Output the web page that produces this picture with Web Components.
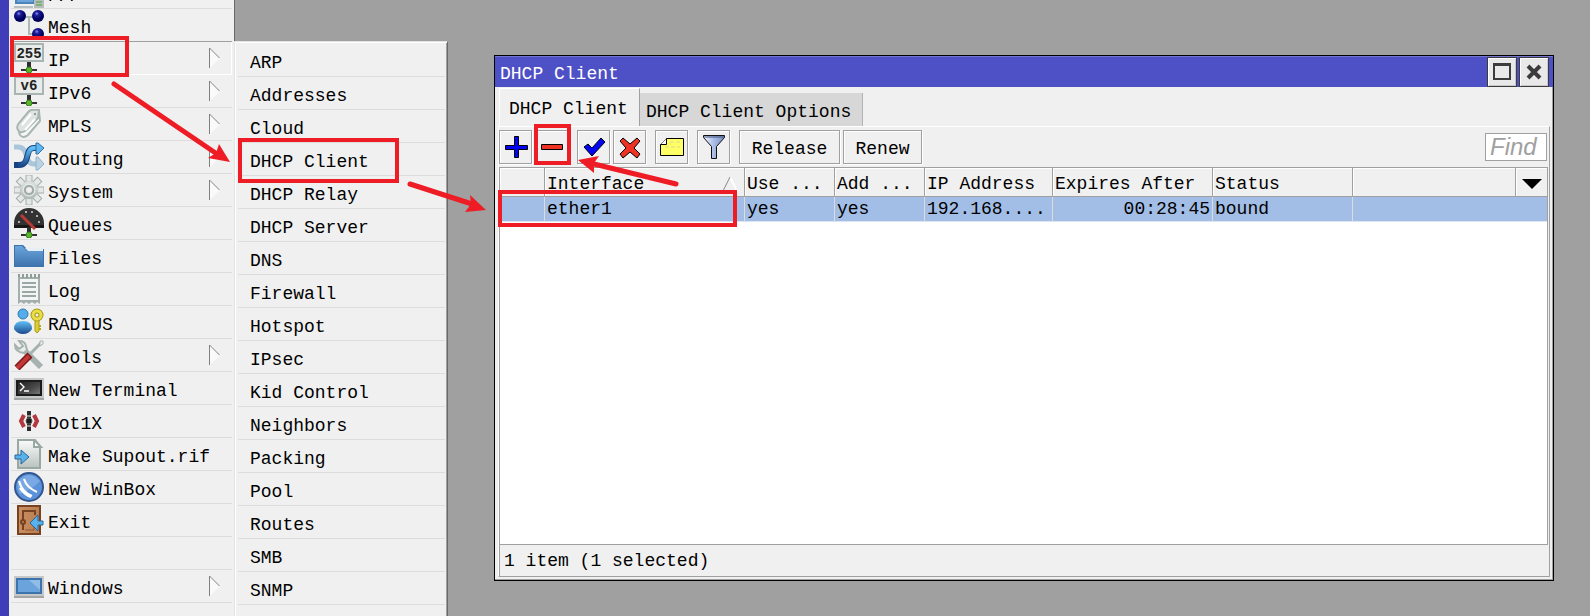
<!DOCTYPE html>
<html lang="en">
<head>
<meta charset="utf-8">
<title>WinBox - DHCP Client</title>
<style>
  html, body { margin: 0; height: 100%; }
  body {
    overflow: hidden;
    background: #a0a0a0;
    color: #000;
    font: 18px/24px "Liberation Mono", "DejaVu Sans Mono", monospace;
  }
</style>
</head>
<body>
<wb-desktop>
  <wb-menu slot="menu" label="Main menu">
    <wb-item icon="ppp" cut>PPP</wb-item>
    <wb-item icon="mesh" before-active>Mesh</wb-item>
    <wb-item icon="ip" sub active>IP</wb-item>
    <wb-item icon="ipv6" sub>IPv6</wb-item>
    <wb-item icon="mpls" sub>MPLS</wb-item>
    <wb-item icon="routing" sub>Routing</wb-item>
    <wb-item icon="system" sub>System</wb-item>
    <wb-item icon="queues">Queues</wb-item>
    <wb-item icon="files">Files</wb-item>
    <wb-item icon="log">Log</wb-item>
    <wb-item icon="radius">RADIUS</wb-item>
    <wb-item icon="tools" sub>Tools</wb-item>
    <wb-item icon="terminal">New Terminal</wb-item>
    <wb-item icon="dot1x">Dot1X</wb-item>
    <wb-item icon="supout">Make Supout.rif</wb-item>
    <wb-item icon="winbox">New WinBox</wb-item>
    <wb-item icon="exit">Exit</wb-item>
    <wb-item blank></wb-item>
    <wb-item icon="windows" sub>Windows</wb-item>
  </wb-menu>
  <wb-menu slot="submenu" popup label="IP">
    <wb-item>ARP</wb-item>
    <wb-item>Addresses</wb-item>
    <wb-item>Cloud</wb-item>
    <wb-item>DHCP Client</wb-item>
    <wb-item>DHCP Relay</wb-item>
    <wb-item>DHCP Server</wb-item>
    <wb-item>DNS</wb-item>
    <wb-item>Firewall</wb-item>
    <wb-item>Hotspot</wb-item>
    <wb-item>IPsec</wb-item>
    <wb-item>Kid Control</wb-item>
    <wb-item>Neighbors</wb-item>
    <wb-item>Packing</wb-item>
    <wb-item>Pool</wb-item>
    <wb-item>Routes</wb-item>
    <wb-item>SMB</wb-item>
    <wb-item>SNMP</wb-item>
    <wb-item>SSH</wb-item>
  </wb-menu>
  <wb-window slot="window">
    <span slot="title">DHCP Client</span>
    <wb-tab slot="tabs" selected>DHCP Client</wb-tab>
    <wb-tab slot="tabs">DHCP Client Options</wb-tab>
    <wb-toolbar slot="toolbar"></wb-toolbar>
    <wb-grid></wb-grid>
    <span slot="status">1 item (1 selected)</span>
  </wb-window>
  <wb-marks slot="marks"></wb-marks>
</wb-desktop>

<script>
const port = `<path d="M13 19h4v6h-4z" fill="#2e2e2e"/><path d="M1 27h28" stroke="url(#fade)" stroke-width="2"/><path d="M7 27h16" stroke="#333" stroke-width="2"/><circle cx="15" cy="27" r="3" fill="#5ab52c" stroke="#35821a" stroke-width="1"/>`;
const tooth = [0, 45, 90, 135, 180, 225, 270, 315].map(a => `<path d="M12 7V0h6v7z" transform="rotate(${a} 15 15)"/>`).join('');
const defs = `<defs>
  <linearGradient id="fade"><stop stop-color="#aaa" stop-opacity=".3"/><stop offset=".5" stop-color="#222"/><stop offset="1" stop-color="#aaa" stop-opacity=".3"/></linearGradient>
  <linearGradient id="blue" x2="0" y2="1"><stop stop-color="#6aa5dc"/><stop offset="1" stop-color="#3f74ae"/></linearGradient>
  <linearGradient id="sky" x2="0" y2="1"><stop stop-color="#62c0f6"/><stop offset="1" stop-color="#1c4a8e"/></linearGradient>
  <linearGradient id="paper" x2="0" y2="1"><stop stop-color="#fafcfb"/><stop offset="1" stop-color="#b8c2be"/></linearGradient>
  <linearGradient id="steel" gradientUnits="userSpaceOnUse" x1="0" y1="4" x2="0" y2="26"><stop stop-color="#e4e8e7"/><stop offset="1" stop-color="#a9b4b1"/></linearGradient>
  <linearGradient id="screen" x2="1" y2="1"><stop stop-color="#222"/><stop offset=".6" stop-color="#4a4a4a"/><stop offset="1" stop-color="#777"/></linearGradient>
  <radialGradient id="ball" cx=".4" cy=".3"><stop stop-color="#8a90e8"/><stop offset=".35" stop-color="#1c1c9c"/><stop offset="1" stop-color="#00005c"/></radialGradient>
  <linearGradient id="door" x2="1"><stop stop-color="#c98f61"/><stop offset="1" stop-color="#b87d50"/></linearGradient>
  <linearGradient id="flt"><stop stop-color="#f2f6ff"/><stop offset=".5" stop-color="#a9bce6"/><stop offset="1" stop-color="#7c90c2"/></linearGradient>
</defs>`;
const ICONS = {
  ppp: `<path d="M1 4h20v22H1z" fill="#4c83bd"/><path d="M3 6h16v18H3z" fill="#6ba5dc"/><path d="M0 28h19v2H0z" fill="#b5bfc4"/><path d="M20 2h10v28H20z" fill="#b4beba"/><path d="M22 24h6M22 27h6" stroke="#4f9e3a"/>`,
  mesh: `<path d="M12 7h6M15 7v17h4" fill="none" stroke="#adb9b6" stroke-width="2"/><circle cx="6" cy="6" r="6" fill="url(#ball)"/><circle cx="24" cy="6" r="6" fill="url(#ball)"/><circle cx="24" cy="24" r="6" fill="url(#ball)"/>`,
  ip: `<path d="M1 1h28v17H1z" fill="#e9ecea" stroke="#a9b5b2" stroke-width="2"/><text x="15" y="15" text-anchor="middle" font-family="Liberation Mono,monospace" font-weight="700" font-size="14" fill="#222">255</text>${port}`,
  ipv6: `<path d="M1 1h28v17H1z" fill="#e9ecea" stroke="#a9b5b2" stroke-width="2"/><text x="15" y="14" text-anchor="middle" font-family="Liberation Mono,monospace" font-weight="700" font-size="14" fill="#222">v6</text>${port}`,
  mpls: `<path d="M17 6Q20 2 25 2L26 12L14 26Q9 30 6 26Q4 23 7 19z" fill="#f4f6f5" stroke="#a9b5b2" stroke-width="2"/><path d="M15 2Q18 0 25 1L24 9L11 22Q6 25 4 21Q2 18 5 14z" fill="#dfe4e2" stroke="#a9b5b2" stroke-width="2"/><path d="M17 5L8 16M21 10L11 21" stroke="#fff" stroke-width="2"/><circle cx="21" cy="5" r="1" fill="#788380"/>`,
  routing: `<path d="M0 5h4C15 5 10 22 20 22h3" fill="none" stroke="#a9c6da" stroke-width="5"/><path d="M22 15h2l6 7-6 6h-2z" fill="#b9d1e2" stroke="#92b4cb"/><path d="M0 23h5C17 23 10 6 20 6h3" fill="none" stroke="#19437e" stroke-width="6"/><path d="M4 23h1C16 23 11 6 20 6h3" fill="none" stroke="url(#sky)" stroke-width="4"/><path d="M22 1h2l6 5-6 6h-2z" fill="#5fb7ee" stroke="#2b6ea7"/>`,
  system: `<g fill="url(#steel)" stroke="#a3aeab" stroke-width="1"><g>${tooth}</g></g><circle cx="15" cy="15" r="9" fill="url(#steel)"/><circle cx="15" cy="15" r="4" fill="#efefef" stroke="#a0aba8" stroke-width="2"/><circle cx="15" cy="15" r="6" fill="none" stroke="#eef1f0"/>`,
  queues: `<path d="M0 15A15 15 0 0 1 30 15V19H0z" fill="#323232"/><path d="M0 17h30v3H0z" fill="#181818"/><g fill="#d8d8d8"><circle cx="5" cy="14" r="1"/><circle cx="12" cy="4" r="1"/><circle cx="18" cy="4" r="1"/><circle cx="23" cy="8" r="1"/><circle cx="25" cy="14" r="1"/></g>${port}<path d="M7 7L21 21" stroke="#b83a36" stroke-width="3"/>`,
  files: `<path d="M0 4h9l4 4h17v18H0z" fill="#3d73ad"/><path d="M11 7h18v4H15z" fill="#e7eff6"/><path d="M1 5h7l5 5h16v15H1z" fill="url(#blue)"/>`,
  log: `<path d="M4 3h22v27l-3-2-2 2-3-2-3 2-3-2-2 2-3-2-3 2z" fill="#a3afac"/><path d="M6 5h18v21H6z" fill="#f3f5f4"/><path d="M4 0h2v3H4zM8 0h2v4H8zM12 0h2v4h-2zM16 0h2v4h-2zM20 0h2v4h-2zM24 0h2v4h-2z" fill="#8f9d99"/><path d="M8 9h14M8 13h14M8 18h14M8 22h14" stroke="#9aa7a4" stroke-width="2"/>`,
  radius: `<circle cx="9" cy="7" r="5" fill="#55adea" stroke="#2e78b2"/><path d="M0 22Q0 14 9 14Q18 14 18 22Q15 27 9 27Q3 27 0 22z" fill="url(#sky)"/><path d="M21 12h4v12l-2 2-2-2z" fill="#ddcf36" stroke="#a99a12"/><circle cx="23" cy="8" r="4" fill="none" stroke="#a99a12" stroke-width="5"/><circle cx="23" cy="8" r="4" fill="none" stroke="#e9dd48" stroke-width="3"/><path d="M25 19h2M25 22h2" stroke="#b8a81c" stroke-width="2"/>`,
  tools: `<path d="M10 10L27 27" stroke="#a6b2af" stroke-width="6"/><path d="M5 1Q11 1 12 6L13 10L10 13Q1 12 1 5L5 9L9 6z" fill="#e9edec" stroke="#a6b2af" stroke-width="2"/><path d="M27 3L13 17" stroke="#a6b2af" stroke-width="3"/><path d="M26 1h3v3l-3 2z" fill="#eef1f0" stroke="#a6b2af"/><path d="M16 15L3 28" stroke="#7e1717" stroke-width="7"/><path d="M15 16L3 28" stroke="#c13838" stroke-width="4"/>`,
  terminal: `<path d="M0 5h30v20H0z" fill="#c6c8c8"/><path d="M0 25h30v2H0z" fill="#a4a6a6"/><path d="M2 7h26v16H2z" fill="#1b1b1b"/><path d="M4 9h22v12H4z" fill="url(#screen)"/><path d="M6 10l4 4-4 4M10 18h5" fill="none" stroke="#fff" stroke-width="1.4"/>`,
  dot1x: `<path d="M10 9L7 15l3 6M20 9l3 6-3 6" fill="none" stroke="#b3383f" stroke-width="4"/><path d="M13 5h4v20h-4z" fill="#2b2b2b"/><path d="M13 10h4M13 20h4" stroke="#efefef"/><circle cx="15" cy="15" r="3" fill="#1b1b1b" stroke="#555"/>`,
  supout: `<path d="M4 1h17l5 6v22H4z" fill="url(#paper)" stroke="#9aa8a4" stroke-width="2"/><path d="M20 1v7h7z" fill="#fff" stroke="#9aa8a4" stroke-width="2"/><path d="M1 16h6v-5l8 7-8 7v-5H1z" fill="#58b2ec" stroke="#2a669e"/>`,
  winbox: `<circle cx="15" cy="15" r="14" fill="#5b92da" stroke="#33568f" stroke-width="2"/><path d="M4 9Q15-3 26 9Q20 16 6 22Q2 15 4 9z" fill="#8fb8ec" opacity=".6"/><path d="M5 9Q8 20 18 24M10 7Q13 16 23 20M6 16Q11 23 17 25" fill="none" stroke="#fff" stroke-width="2.2"/>`,
  exit: `<path d="M4 1h22v28H4z" fill="url(#door)" stroke="#774221" stroke-width="2"/><path d="M9 25V6h12v4" fill="none" stroke="#774221" stroke-width="2"/><path d="M11 25h9v-5" fill="none" stroke="#915b34"/><circle cx="9" cy="17" r="2" fill="#b98056" stroke="#774221" stroke-width="2"/><path d="M29 16h-5v-6l-8 8 8 8v-6h5z" fill="#58b2ec" stroke="#2a669e"/>`,
  windows: `<path d="M0 5h30v20H0z" fill="#c6c8c8"/><path d="M0 25h30v2H0z" fill="#a4a6a6"/><path d="M2 7h26v16H2z" fill="#3d73ad"/><path d="M4 9h22v12H4z" fill="#6ba3dc"/><path d="M15 9h11v10z" fill="#b8d6f2" opacity=".5"/>`,
  add: `<path d="M13.500 4.500h4v9h9v4h-9v8h-4v-8h-9v-4h9z" fill="#0404f4" stroke="#000"/>`,
  remove: `<path d="M4.500 12.500h21v5h-21z" fill="#ee3224" stroke="#000"/>`,
  enable: `<path d="M5 15l4-3 4 4L22 6l4 4-13 14z" fill="#0404f4" stroke="#000"/>`,
  disable: `<path d="M8 6l7 6 7-6 3 3-6 7 6 6-3 4-7-6-7 6-3-4 6-6-6-7z" fill="#ee3224" stroke="#000"/>`,
  comment: `<path d="M3.500 12.500l6-6h17v17h-23z" fill="#ffff66" stroke="#000"/><path d="M3.500 12.500h6v-6" fill="#fff" stroke="#000"/><path d="M13 10h10M8 15h15" stroke="#d9d98a" stroke-dasharray="4 2"/>`,
  filter: `<path d="M4.500 3.500h21v2l-8 9v12h-5v-12l-8-9z" fill="url(#flt)" stroke="#111"/><path d="M5 5h20" stroke="#3c4c78"/>`,
  maximize: `<path d="M7 7h16v15H7z" fill="none" stroke="#3c3c3c" stroke-width="2"/><path d="M6 6h18v3H6z" fill="#3c3c3c"/>`,
  close: `<path d="M9 9l12 12M21 9L9 21" stroke="#3c3c3c" stroke-width="4"/>`
};

function define(name, html, setup) {
  customElements.define(name, class extends HTMLElement {
    constructor() {
      super();
      const tpl = document.createElement('template');
      tpl.innerHTML = html;
      this.attachShadow({ mode: 'open' }).append(tpl.content.cloneNode(true));
    }
    connectedCallback() { if (setup) setup(this, this.shadowRoot); }
  });
}

define('wb-icon', `<style>
  :host { display: block; flex: none; width: 30px; height: 30px; }
  svg { display: block; width: 100%; height: 100%; }
</style><svg viewBox="0 0 30 30" aria-hidden="true"></svg>`,
(el, root) => { root.querySelector('svg').innerHTML = defs + (ICONS[el.getAttribute('name')] || ''); });

define('wb-desktop', `<style>
  :host { display: flex; position: relative; height: 100vh; overflow: hidden; align-items: stretch; }
  .edge { flex: none; width: 9px; background: #403db9; }
  main { flex: 1; min-width: 0; display: flex; padding: 55px 36px 35px 46px; }
  ::slotted([slot=window]) { flex: 1; min-width: 0; }
</style>
<div class="edge"></div>
<slot name="menu"></slot>
<slot name="submenu"></slot>
<main><slot name="window"></slot></main>
<slot name="marks"></slot>`);

define('wb-menu', `<style>
  :host { display: block; flex: none; box-sizing: border-box; width: 226px; padding: 0 2px; background: #f0f0f0; border-right: 1px solid #696969; }
  :host([popup]) { width: 214px; margin: 41px 0 0 -1px; padding: 0 2px; border: solid; border-width: 1px 1px 0; border-color: #e3e3e3 #696969 #696969 #e3e3e3; box-shadow: inset 1px 1px #fff, inset -1px 0 #a0a0a0; }
  :host([popup]) nav { padding: 2px 0 0 1px; }
</style><nav><slot></slot></nav>`,
(el, root) => root.querySelector('nav').setAttribute('aria-label', el.getAttribute('label')));

define('wb-item', `<style>
  :host { display: block; }
  button, .blank { display: flex; align-items: center; gap: 4px; box-sizing: border-box; width: 100%; height: 33px; margin: 0; padding: 0 11px 0 3px; border: 0; border-bottom: 1px solid #dcdcdc; background: none; color: inherit; font: inherit; text-align: left; white-space: pre; }
  .label { flex: 1; padding-top: 6px; }
  .arrow { width: 12px; height: 22px; }
  :host(:not([icon])) button { padding-left: 12px; }
  :host([cut]) button { height: 9px; align-items: flex-end; overflow: hidden; }
  :host([before-active]) button { border-bottom-color: #a0a0a0; }
  :host([active]) button { border-bottom-color: #fff; box-shadow: inset -1px 0 #fff; }
</style>
<button type="button"><wb-icon></wb-icon><span class="label"><slot></slot></span>
<svg class="arrow" viewBox="0 0 12 22" aria-hidden="true"><path d="M1 1L11 11L1 21z" fill="#fafafa"/><path d="M.5 21V1L10.500 11" fill="none" stroke="#808080"/></svg></button>`,
(el, root) => {
  if (el.hasAttribute('blank')) {
    const gap = document.createElement('div');
    gap.className = 'blank';
    root.querySelector('button').replaceWith(gap);
    return;
  }
  const icon = root.querySelector('wb-icon'), name = el.getAttribute('icon');
  if (name) {
    const fresh = document.createElement('wb-icon');
    fresh.setAttribute('name', name);
    icon.replaceWith(fresh);
  } else icon.remove();
  if (!el.hasAttribute('sub')) root.querySelector('.arrow').remove();
});

define('wb-tab', `<style>
  :host { display: block; }
  button { box-sizing: border-box; height: 33px; margin: 0; padding: 4px 9px 0 6px; border: 0; border-right: 1px solid #b4b4b4; background: #d7d7d7; color: inherit; font: inherit; white-space: nowrap; width: 223px; text-align: left; }
  :host([selected]) button { width: 141px; height: 38px; padding: 2px 9px 0; background: #f0f0f0; border: 1px solid #fff; border-right-color: #a0a0a0; border-bottom: 0; }
</style><button type="button" role="tab"><slot></slot></button>`,
(el, root) => root.querySelector('button').setAttribute('aria-selected', el.hasAttribute('selected')));

define('wb-window', `<style>
  :host { display: flex; flex-direction: column; box-sizing: border-box; border: 1px solid #000; background: #f0f0f0; box-shadow: inset -1px -1px #a0a0a0; }
  header { display: flex; align-items: flex-end; gap: 2px; height: 31px; padding: 0 4px 0 5px; background: #4e50c6; box-shadow: inset 0 1px #7374d0; color: #fff; }
  h1 { flex: 1; margin: 0 0 1px; font: inherit; }
  header button { box-sizing: border-box; width: 30px; height: 30px; margin: 0; padding: 0; border: 1px solid #3c3c3c; background: #e9e9e9; display: grid; place-items: center; place-content: center; box-shadow: inset 1px 1px #fff, inset -1px -1px #c8c8c8; }
  .tabs { display: flex; align-items: flex-end; height: 39px; padding-left: 4px; }
  .panel { flex: 1; min-height: 0; display: flex; flex-direction: column; margin: 0 3px 3px; padding-right: 1px; border: 1px solid #fff; border-right-color: #a0a0a0; border-bottom-color: #a0a0a0; }
  footer { box-sizing: border-box; height: 31px; padding: 4px; border-left: 1px solid #a0a0a0; }
</style>
<header><h1><slot name="title"></slot></h1>
<button type="button" aria-label="Maximize"><wb-icon name="maximize"></wb-icon></button>
<button type="button" aria-label="Close"><wb-icon name="close"></wb-icon></button></header>
<div class="tabs" role="tablist"><slot name="tabs"></slot></div>
<section class="panel"><slot name="toolbar"></slot><slot></slot><footer><slot name="status"></slot></footer></section>`);

define('wb-toolbar', `<style>
  :host { display: flex; align-items: center; gap: 9px; padding: 3px 1px 3px 0; }
  .group { display: flex; gap: 3px; }
  button { box-sizing: border-box; min-width: 33px; height: 34px; margin: 0; padding: 0; border: 1px solid #a0a0a0; background: #f0f0f0; color: inherit; font: inherit; display: grid; place-items: center; box-shadow: inset 1px 1px #fff, 1px 1px #fff; }
  .wide { width: 101px; padding-top: 3px; }
  .mid { width: 79px; padding-top: 3px; }
  input { box-sizing: border-box; width: 62px; height: 28px; margin: 0 0 0 auto; padding: 0 4px; border: 1px solid #a0a0a0; background: #fff; font: italic 24px/26px "Liberation Sans", Arial, sans-serif; outline: 0; }
  input::placeholder { color: #a0a0a0; opacity: 1; }
</style>
<div class="group"><button type="button" aria-label="Add"><wb-icon name="add"></wb-icon></button>
<button type="button" aria-label="Remove"><wb-icon name="remove"></wb-icon></button></div>
<div class="group"><button type="button" aria-label="Enable"><wb-icon name="enable"></wb-icon></button>
<button type="button" aria-label="Disable"><wb-icon name="disable"></wb-icon></button></div>
<button type="button" aria-label="Comment"><wb-icon name="comment"></wb-icon></button>
<button type="button" aria-label="Filter"><wb-icon name="filter"></wb-icon></button>
<div class="group"><button type="button" class="wide">Release</button><button type="button" class="mid">Renew</button></div>
<input type="text" placeholder="Find" aria-label="Find">`);

define('wb-grid', `<style>
  :host { display: block; flex: 1; min-height: 0; overflow: hidden; border: 1px solid #a0a0a0; background: #fff; }
  table { width: 100%; table-layout: fixed; border-collapse: separate; border-spacing: 0; }
  th, td { box-sizing: border-box; padding: 0 0 0 2px; border-right: 1px solid #a0a0a0; font-weight: 400; text-align: left; white-space: nowrap; overflow: hidden; }
  th { height: 29px; padding-top: 3px; line-height: 24px; background: #f0f0f0; border-bottom: 1px solid #a0a0a0; box-shadow: inset 1px 1px #fff; }
  td { height: 25px; line-height: 24px; background: #a3bee6; border-right-color: #dcdcdc; border-bottom: 1px solid #dbe5f4; }
  th:last-child, td:last-child, td:nth-last-child(2) { border-right: 0; }
  .num { text-align: right; padding-right: 2px; }
  .sort { display: flex; justify-content: space-between; align-items: center; padding-right: 6px; }
  .menu { display: grid; place-items: center; width: 28px; height: 24px; margin: 0; padding: 0; border: 0; background: none; }
  svg { display: block; }
</style>
<table>
<colgroup><col style="width:45px"><col style="width:200px"><col style="width:90px"><col style="width:90px"><col style="width:128px"><col style="width:160px"><col style="width:140px"><col><col style="width:31px"></colgroup>
<thead><tr><th></th><th><div class="sort">Interface<svg width="16" height="16" viewBox="0 0 16 16" aria-hidden="true"><path d="M8 1l7 14H1" fill="none" stroke="#fff" stroke-width="2"/><path d="M1 15L8 1" stroke="#888"/></svg></div></th><th>Use ...</th><th>Add ...</th><th>IP Address</th><th>Expires After</th><th>Status</th><th></th>
<th><button type="button" class="menu" aria-label="Columns"><svg width="20" height="10" viewBox="0 0 20 10"><path d="M0 0h20L10 10z"/></svg></button></th></tr></thead>
<tbody><tr><td></td><td>ether1</td><td>yes</td><td>yes</td><td>192.168....</td><td class="num">00:28:45</td><td>bound</td><td></td><td></td></tr></tbody>
</table>`);

define('wb-marks', `<style>
  :host { display: block; position: absolute; inset: 0; pointer-events: none; }
  svg { display: block; width: 100%; height: 100%; }
  .box, .line { fill: none; stroke: #ee1c25; stroke-width: 4; }
  .line { stroke-width: 5; stroke-linecap: round; }
  .head { fill: #ee1c25; }
</style>
<svg aria-hidden="true">
  <rect class="box" x="12" y="38" width="115" height="37"/>
  <rect class="box" x="240" y="140" width="157" height="41"/>
  <rect class="box" x="536" y="126" width="33" height="37"/>
  <rect class="box" x="500" y="192" width="235" height="33"/>
  <path class="line" d="M114 84L217 154"/><path class="head" d="M230 162L219 144L216 153L208 158z"/>
  <path class="line" d="M410 184L472 204"/><path class="head" d="M486 210L470 195L471 204L465 212z"/>
  <path class="line" d="M676 184L594 164"/><path class="head" d="M578 160L599 156L594 163L594 173z"/>
</svg>`);
</script>
</body>
</html>
